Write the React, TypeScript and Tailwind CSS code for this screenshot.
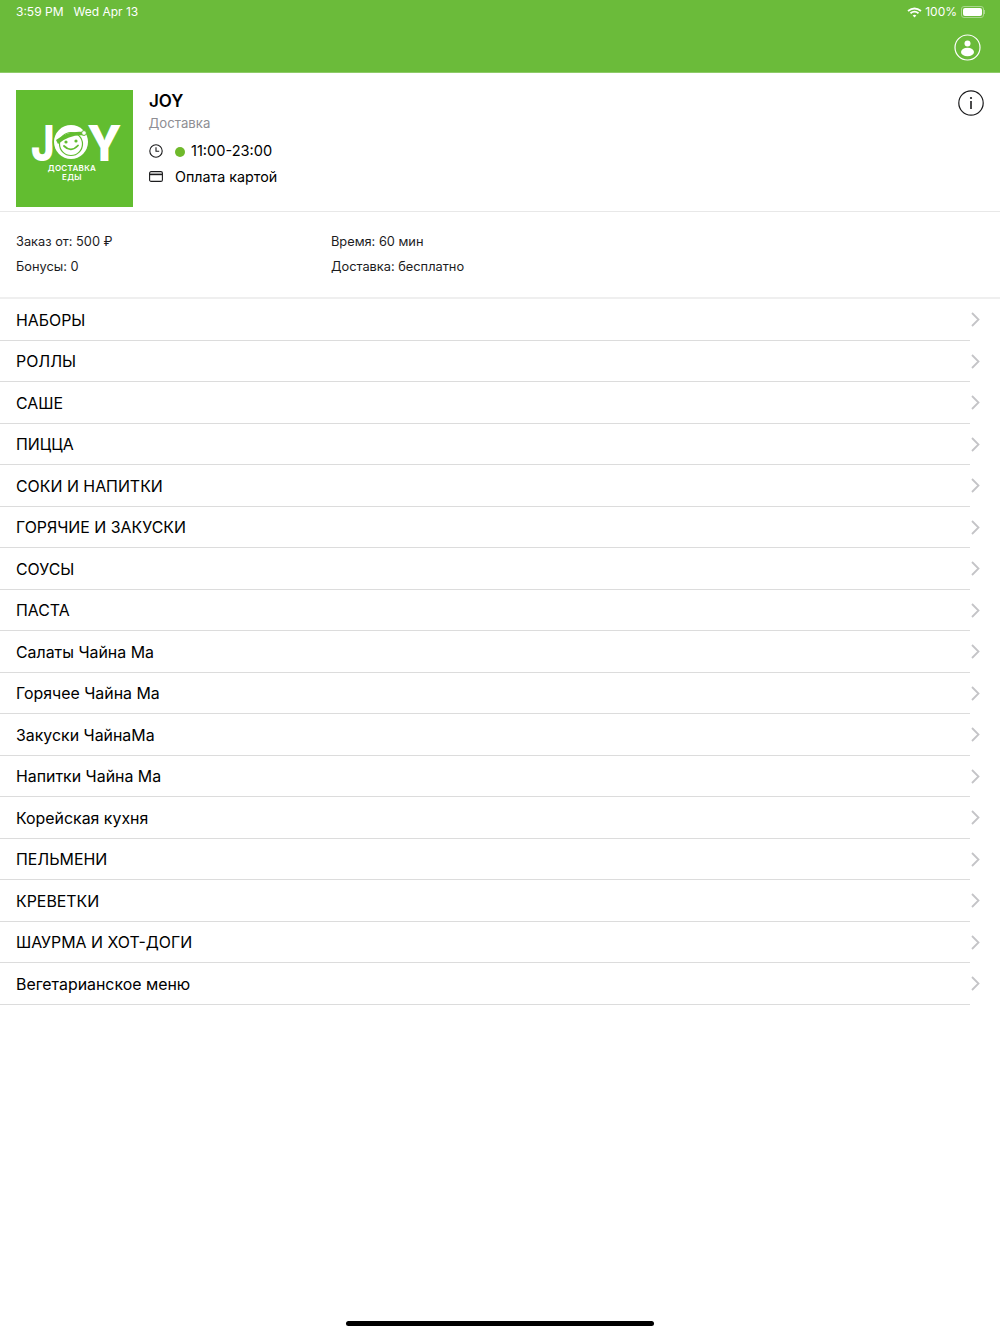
const CATEGORIES = [
  'НАБОРЫ',
  'РОЛЛЫ',
  'САШЕ',
  'ПИЦЦА',
  'СОКИ И НАПИТКИ',
  'ГОРЯЧИЕ И ЗАКУСКИ',
  'СОУСЫ',
  'ПАСТА',
  'Салаты Чайна Ма',
  'Горячее Чайна Ма',
  'Закуски ЧайнаМа',
  'Напитки Чайна Ма',
  'Корейская кухня',
  'ПЕЛЬМЕНИ',
  'КРЕВЕТКИ',
  'ШАУРМА И ХОТ-ДОГИ',
  'Вегетарианское меню',
]

function Logo() {
  return (
    <div className="w-[117px] h-[117px] bg-[#62bd30] shrink-0">
      <svg width="117" height="117" viewBox="0 0 117 117">
        <text transform="translate(15 71) scale(0.8 1)" fill="#fff" fontSize="50" fontWeight="800" fontFamily="Inter, sans-serif">J</text>
        <text transform="translate(71 71) scale(0.92 1)" fill="#fff" fontSize="50" fontWeight="800" fontFamily="Inter, sans-serif">Y</text>
        <circle cx="55" cy="52" r="18.5" fill="#62bd30" />
        <circle cx="55" cy="52" r="17" fill="#fff" />
        <circle cx="55" cy="54" r="11.5" fill="none" stroke="#62bd30" strokeWidth="1.2" />
        <path d="M40 50 Q52 40 69 42 L69 45.5 Q54 44 42 54 Z" fill="#62bd30" />
        <circle cx="68" cy="43" r="2.4" fill="#fff" stroke="#62bd30" strokeWidth="1" />
        <circle cx="50" cy="52" r="1.6" fill="#62bd30" />
        <circle cx="60" cy="51" r="1.6" fill="#62bd30" />
        <path d="M48 56 Q55 63 62 55.5" fill="none" stroke="#62bd30" strokeWidth="1.8" strokeLinecap="round" />
        <text x="56" y="80.5" textAnchor="middle" fill="#fff" fontSize="8" letterSpacing="0.3" fontWeight="600" fontFamily="Inter, sans-serif">ДОСТАВКА</text>
        <text x="56" y="90" textAnchor="middle" fill="#fff" fontSize="8" letterSpacing="0.3" fontWeight="600" fontFamily="Inter, sans-serif">ЕДЫ</text>
      </svg>
    </div>
  )
}

export default function App() {
  return (
    <div className="relative h-[1334px] w-[1000px] bg-white text-black font-['Inter',sans-serif] overflow-hidden">
      <header className="h-[73px] bg-[#6bbb3a] text-white border-b border-[#8ecb68]">
        <div className="flex justify-between items-center h-6 pl-4 pr-[15px] text-[12px]">
          <div className="flex gap-[10px]">
            <span>3:59 PM</span>
            <span>Wed Apr 13</span>
          </div>
          <div className="flex items-center gap-[3px]">
            <svg width="15" height="11" viewBox="0 0 15 11" fill="none" stroke="#fff" strokeWidth="1.8">
              <path d="M1 4 Q7.5 -1 14 4" />
              <path d="M3.5 6.3 Q7.5 3 11.5 6.3" />
              <path d="M7.5 10.5 L5.7 8.5 Q7.5 7 9.3 8.5 Z" fill="#fff" stroke="none" />
            </svg>
            <span>100%</span>
            <div className="flex items-center ml-[1px]">
              <div className="w-[23px] h-[12px] rounded-[3px] border border-[#a9d78d] p-[1px]">
                <div className="w-full h-full bg-white rounded-[2px]" />
              </div>
              <div className="w-[1px] h-[4px] bg-[#a9d78d]" />
            </div>
          </div>
        </div>
        <div className="flex justify-end pr-[19px] pt-[10px]">
          <svg width="27" height="27" viewBox="0 0 27 27" fill="#fff">
            <circle cx="13.5" cy="13.5" r="12.5" fill="none" stroke="#fff" strokeWidth="1.2" />
            <circle cx="13.5" cy="9.5" r="3" />
            <ellipse cx="13.5" cy="18" rx="6.5" ry="4.3" />
          </svg>
        </div>
      </header>

      <section className="flex h-[139px] pl-4 pt-[17px] pr-4 border-b border-[#e8e8e8]">
        <Logo />
        <div className="ml-4 flex-1">
          <div className="text-[17px] font-semibold leading-5 mt-[1px]">JOY</div>
          <div className="text-[13.2px] text-[#8e8e93] leading-5 mt-[2px] -ml-[0.5px]">Доставка</div>
          <div className="flex items-center h-6 mt-[7px] text-[14.6px]">
            <svg className="-mt-[2px]" width="14" height="14" viewBox="0 0 14 14" fill="none" stroke="#1c1c1e" strokeWidth="1.1">
              <circle cx="7" cy="7" r="6.2" />
              <path d="M7 3.2 V7.3 H10.2" />
            </svg>
            <span className="w-[10px] h-[10px] rounded-full bg-[#6fb92b] ml-[12px] -mt-[1px]" />
            <span className="ml-[6px]">11:00-23:00</span>
          </div>
          <div className="flex items-center h-6 mt-[1px] text-[14.3px]">
            <svg className="-mt-[2px]" width="14" height="11" viewBox="0 0 14 11" fill="none" stroke="#1c1c1e" strokeWidth="1.1">
              <rect x="0.6" y="0.6" width="12.8" height="9.8" rx="1.5" />
              <path d="M0.6 3.4 H13.4" strokeWidth="1.6" />
            </svg>
            <span className="ml-[12px]">Оплата картой</span>
          </div>
        </div>
        <svg width="26" height="26" viewBox="0 0 26 26" fill="none" stroke="#1c1c1e" strokeWidth="1.2">
          <circle cx="13" cy="13" r="12.2" />
          <circle cx="13" cy="8" r="1.1" fill="#1c1c1e" stroke="none" />
          <path d="M13 11 V19" strokeWidth="1.6" />
        </svg>
      </section>

      <section className="grid grid-cols-[315px_1fr] content-start h-[87px] pl-4 pt-[18px] text-[12.8px] leading-[24.5px] text-[#1c1c1e] border-b-2 border-[#efefef]">
        <div>Заказ от: 500 ₽</div>
        <div>Время: 60 мин</div>
        <div>Бонусы: 0</div>
        <div>Доставка: бесплатно</div>
      </section>

      <ul>
        {CATEGORIES.map((name) => (
          <li key={name} className="relative flex items-center h-[41.5px] pl-4 pt-[2px] text-[15.9px]">
            <span>{name}</span>
            <svg className="absolute right-[20px] top-[13px]" width="9" height="15" viewBox="0 0 9 15" fill="none" stroke="#c4c4c7" strokeWidth="1.8">
              <path d="M1 1 L7.5 7.5 L1 14" />
            </svg>
            <div className="absolute left-0 bottom-0 w-[970px] h-[1px] bg-[#dcdcdc]" />
          </li>
        ))}
      </ul>

      <div className="absolute left-[346px] bottom-[8px] w-[308px] h-[5px] rounded-full bg-black" />
    </div>
  )
}
